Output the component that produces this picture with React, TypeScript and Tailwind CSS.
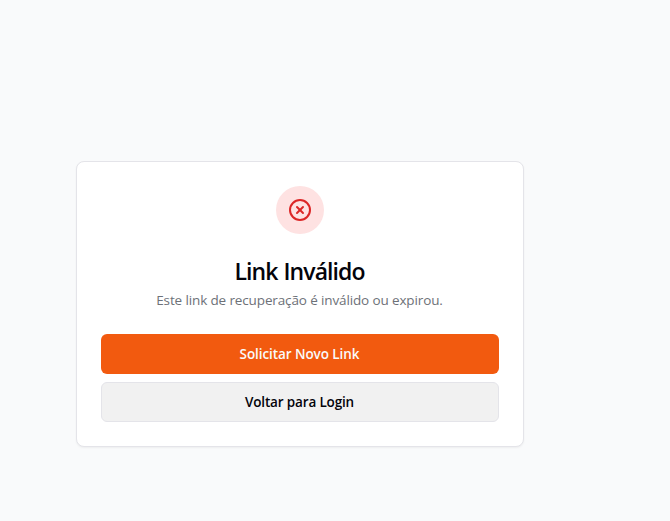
import { CircleX } from "lucide-react";

export default function App() {
  return (
    <main className="flex h-[521px] w-[670px] bg-[#f9fafb] pl-[76px] pt-[161px] font-['Open_Sans','Noto_Sans',sans-serif]">
      <section className="h-[286px] w-[448px] rounded-lg border border-[#e4e4e9] bg-white p-6 shadow-[0_1px_2px_rgba(0,0,0,0.05)]">
        <header className="flex flex-col items-center text-center">
          <div className="flex size-12 items-center justify-center rounded-full bg-[#fee2e2]">
            <CircleX className="size-6 text-[#dc2626]" />
          </div>
          <h1 className="mt-[21px] whitespace-nowrap pr-px text-[23px] font-semibold leading-8 tracking-[-0.92px] text-[#03030a] [word-spacing:1px]">Link Inválido</h1>
          <p className="mt-[3px] whitespace-nowrap pr-px text-[13.5px] leading-5 tracking-[-0.13px] text-[#6d7178]">Este link de recuperação é inválido ou expirou.</p>
        </header>
        <div className="mt-6 flex flex-col gap-2 text-[13.5px] font-semibold">
          <button className="h-10 rounded-md bg-[#f25a0f] pr-px tracking-[-0.08px] text-[#fafafa]">Solicitar Novo Link</button>
          <button className="h-10 rounded-md border border-[#e4e4e9] bg-[#f1f1f1] pr-px tracking-[-0.16px] text-[#03030a]">Voltar para Login</button>
        </div>
      </section>
    </main>
  );
}
